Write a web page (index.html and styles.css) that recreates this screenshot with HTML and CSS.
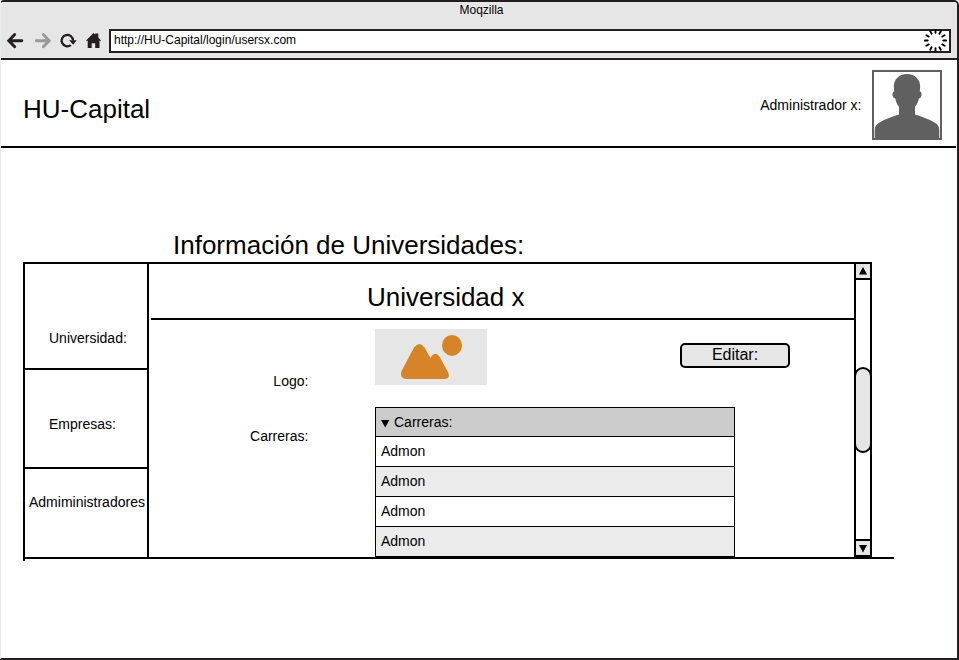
FILE: index.html
```html
<!DOCTYPE html>
<html lang="es">
<head>
<meta charset="utf-8">
<title>Moqzilla</title>
<link rel="stylesheet" href="styles.css">
</head>
<body>
<div class="window">
  <div class="chrome">
    <div class="window-title">Moqzilla</div>
    <div class="toolbar">
      <svg class="nav-icons" width="108" height="24" viewBox="1 29 108 24" fill="none">
        <g stroke="#231f20" stroke-width="2.9" stroke-linecap="round" stroke-linejoin="miter">
          <path d="M9 40.7H21.8M14.7 34.6L8.8 40.7L14.7 46.8"/>
          <path stroke="#999" d="M36.3 40.7H48M43.3 34.6L49.200 40.7L43.3 46.8"/>
        </g>
        <path stroke="#231f20" stroke-width="2.3" d="M70.8 45.1A5.700 5.700 0 1 1 73 40.500"/>
        <path fill="#231f20" d="M69.2 40.200H76.700L73.200 44.800Z"/>
        <path fill="#231f20" d="M85.8 40.7L93.5 33L95.200 34.500V33.6H98.300V37.5L101.2 40.7H99.5V48H95.2V43.2H91.7V48H87.7V40.7Z"/>
      </svg>
      <div class="address">
        <span>http://HU-Capital/login/usersx.com</span>
        <svg class="spinner" width="24" height="24" viewBox="-11.5 -11.5 24 24" stroke="#000" stroke-width="1.9" stroke-linecap="round">
          <path d="M0-7.8V-10.6M0 7.8V10.6M-7.8 0H-10.6M7.8 0H10.6"/>
          <path transform="rotate(30)" d="M0-7.8V-10.6M0 7.8V10.6M-7.8 0H-10.6M7.8 0H10.6"/>
          <path transform="rotate(60)" d="M0-7.8V-10.6M0 7.8V10.6M-7.8 0H-10.6M7.8 0H10.6"/>
        </svg>
      </div>
    </div>
  </div>

  <header class="header">
    <h1>HU-Capital</h1>
    <span class="user">Administrador x:</span>
    <svg class="avatar" width="70" height="70" viewBox="0 0 70 70">
      <rect x="1" y="1" width="68" height="68" fill="#fff" stroke="#606060" stroke-width="2"/>
      <path fill="#606060" d="M35 4C43 4 48.200 9.500 48.200 16.500L47.800 21.500C50.300 21.500 50.300 28 47 28.500C46 32 45 34.500 43 36.800V44.500C49 46.500 57 49 62.500 52.500C66 54.500 67.300 57 67.300 60V69H2.700V60C2.700 57 4 54.500 7.500 52.500C13 49 21 46.500 27 44.500V36.800C25 34.500 24 32 23.300 28.500C19.800 28 19.800 21.500 22.200 21.500L21.800 16.500C21.800 9.500 27 4 35 4Z"/>
    </svg>
  </header>

  <main>
    <h2 class="page-title">Información de Universidades:</h2>
    <div class="panel">
      <nav class="sidebar">
        <a class="side-first">Universidad:</a>
        <a class="side-second">Empresas:</a>
        <a class="side-third">Admiministradores</a>
      </nav>
      <section class="detail">
        <h2 class="detail-title">Universidad x</h2>
        <div class="fields">
          <div class="labels">
            <span>Logo:</span>
            <span>Carreras:</span>
          </div>
          <div class="values">
            <div class="logo-row">
              <svg class="logo" width="112" height="56" viewBox="0 0 112 56">
                <rect width="112" height="56" fill="#e6e6e6"/>
                <g fill="#d68427">
                  <ellipse cx="77" cy="16.400" rx="10" ry="10.500"/>
                  <path d="M39 18.500Q44.500 11.500 49.500 18.500L55.500 29Q60 21.500 64.500 27.500L73 43Q76 50 69.500 50H32Q24.500 50 26.300 42.500Z"/>
                </g>
              </svg>
              <button class="edit">Editar:</button>
            </div>
            <div class="list">
              <div class="list-head"><svg width="9" height="8" viewBox="0 0 9 8"><path d="M0 0H8.400L4.200 7.500Z"/></svg>Carreras:</div>
              <div class="item">Admon</div>
              <div class="item alt">Admon</div>
              <div class="item">Admon</div>
              <div class="item alt">Admon</div>
            </div>
          </div>
        </div>
      </section>
      <div class="scrollbar">
        <div class="arrow"><svg width="8" height="8" viewBox="0 0 8 8"><path d="M4 0L8 7.500H0Z"/></svg></div>
        <div class="thumb"></div>
        <div class="arrow down"><svg width="8" height="8" viewBox="0 0 8 8"><path d="M0 0H8L4 7.500Z"/></svg></div>
      </div>
    </div>
    <div class="baseline"></div>
  </main>
</div>
</body>
</html>
```
FILE: styles.css
```css
* { box-sizing: border-box; }
body {
  margin: 0;
  background: #fff;
  color: #000;
  font: 14px/16px "Liberation Sans", Arial, sans-serif;
}
h1, h2 { margin: 0; font-size: 26px; line-height: 30px; font-weight: 400; }
svg { display: block; flex: none; }

.window {
  width: 959px;
  height: 660px;
  border: 2px solid #231f20;
  border-left: 1px solid #ebebeb;
  border-radius: 4px 5px 0 0;
  overflow: hidden;
}
.chrome { height: 58px; background: #e6e6e6; border-bottom: 2px solid #231f20; }
.window-title { height: 27px; padding-left: 5px; font-size: 12px; line-height: 16px; text-align: center; }
.toolbar { display: flex; margin-right: 6px; }
.address {
  flex: 1;
  height: 24px;
  display: flex;
  justify-content: space-between;
  border: 2px solid #231f20;
  padding-left: 3px;
  background: #fff;
  font-size: 12px;
  line-height: 18px;
}
.spinner { margin: -2px 1px 0 0; }

.header {
  display: flex;
  height: 88px;
  margin-right: 1px;
  padding: 10px 14px 0 22px;
  border-bottom: 2px solid #000;
}
.header h1 { flex: 1; padding-top: 24px; }
.user { padding: 27px 10.6px 0 0; }

main { padding: 82px 0 0 22px; }
.page-title { height: 32px; padding-left: 150px; }
.panel {
  display: flex;
  width: 849px;
  height: 295px;
  border-top: 2px solid #000;
}
.sidebar {
  display: flex;
  flex-direction: column;
  width: 126px;
  height: 297px;
  border-left: 2px solid #000;
}
.sidebar a { border-right: 2px solid #000; border-bottom: 2px solid #000; }
.side-first { height: 106px; padding: 66px 0 0 24px; }
.side-second { height: 99px; padding: 46px 0 0 24px; }
.sidebar .side-third { height: 88px; padding: 25px 0 0 4px; border-bottom: 0; }
.detail { width: 705px; }
.detail-title { height: 56px; margin-left: 2px; padding: 18px 0 0 216px; border-bottom: 2px solid #000; }
.fields { display: flex; padding-top: 9px; }
.labels {
  display: flex;
  flex-direction: column;
  gap: 39px;
  width: 226px;
  padding: 44px 66.6px 0 0;
  text-align: right;
}
.values { width: 415px; }
.logo-row { display: flex; justify-content: space-between; }
.edit {
  width: 110px;
  height: 25px;
  margin-top: 14px;
  padding: 0 0 2px;
  border: 2px solid #000;
  border-radius: 5px;
  background: #e6e6e6;
  color: #000;
  font: 16px/19px "Liberation Sans", Arial, sans-serif;
}
.list { width: 360px; margin-top: 22px; border: 1px solid #000; }
.list-head {
  display: flex;
  align-items: center;
  gap: 4px;
  height: 28px;
  padding-left: 5px;
  background: #ccc;
}
.list-head svg { margin-top: 3px; }
.item { height: 30px; padding: 6px 0 0 5px; border-top: 1px solid #000; }
.alt { background: #ebebeb; }

.scrollbar {
  display: flex;
  flex-direction: column;
  width: 18px;
  border: 2px solid #000;
  border-top: 0;
}
.arrow {
  display: flex;
  justify-content: center;
  height: 16px;
  padding-top: 3px;
  border-bottom: 2px solid #000;
  background: #e6e6e6;
}
.arrow.down { margin-top: auto; border-bottom: 0; border-top: 2px solid #000; padding-top: 4px; }
.thumb {
  height: 86px;
  margin: 87px -2px 0;
  border: 2px solid #000;
  border-radius: 9px;
  background: #e6e6e6;
}
.baseline { width: 869px; height: 2px; margin-left: 2px; background: #000; }
```
